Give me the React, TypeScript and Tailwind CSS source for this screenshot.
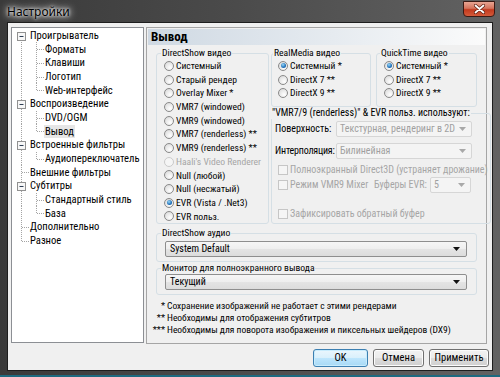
import React from "react";

type TreeRow = {
  label: string;
  level: 0 | 1;
  parent?: boolean;
  lastChild?: boolean;
  first?: boolean;
  last?: boolean;
  selected?: boolean;
};

const treeRows: TreeRow[] = [
  { label: "Проигрыватель", level: 0, parent: true, first: true },
  { label: "Форматы", level: 1 },
  { label: "Клавиши", level: 1 },
  { label: "Логотип", level: 1 },
  { label: "Web-интерфейс", level: 1, lastChild: true },
  { label: "Воспроизведение", level: 0, parent: true },
  { label: "DVD/OGM", level: 1 },
  { label: "Вывод", level: 1, lastChild: true, selected: true },
  { label: "Встроенные фильтры", level: 0, parent: true },
  { label: "Аудиопереключатель", level: 1, lastChild: true },
  { label: "Внешние фильтры", level: 0 },
  { label: "Субтитры", level: 0, parent: true },
  { label: "Стандартный стиль", level: 1 },
  { label: "База", level: 1, lastChild: true },
  { label: "Дополнительно", level: 0 },
  { label: "Разное", level: 0, last: true },
];

const H = 13.7;
const DOT = { stroke: "#a3a3a3", strokeWidth: 1, strokeDasharray: "1 1" };

function Connector({ r }: { r: TreeRow }) {
  const c = 7;
  if (r.level === 0)
    return (
      <svg width="18" height={H} viewBox={`0 0 18 ${H}`} className="shrink-0">
        <line x1="9.5" x2="9.5" y1={r.first ? c : 0} y2={r.last ? c : H} {...DOT} />
        {!r.parent && <line x1="10" x2="17" y1={c + 0.5} y2={c + 0.5} {...DOT} />}
        {r.parent && (
          <>
            <rect x="5.5" y={c - 3.5} width="8" height="8" fill="#f7f7f7" stroke="#919191" />
            <line x1="7.5" x2="11.5" y1={c + 0.5} y2={c + 0.5} stroke="#2a3a50" />
          </>
        )}
      </svg>
    );
  return (
    <svg width="33" height={H} viewBox={`0 0 33 ${H}`} className="shrink-0">
      <line x1="9.5" x2="9.5" y1={0} y2={H} {...DOT} />
      <line x1="24.5" x2="24.5" y1={0} y2={r.lastChild ? c : H} {...DOT} />
      <line x1="25" x2="32" y1={c + 0.5} y2={c + 0.5} {...DOT} />
    </svg>
  );
}

const Radio = ({ checked = false, disabled = false }: { checked?: boolean; disabled?: boolean }) => (
  <span
    className={`w-[10px] h-[10px] rounded-full border shrink-0 flex items-center justify-center ${
      disabled
        ? "border-[#cacaca] bg-[#f5f5f5]"
        : "border-[#8a8a8a] bg-[radial-gradient(circle_at_65%_70%,#ffffff,#e6e6e6_60%,#cfcfcf)]"
    }`}
  >
    {checked && (
      <span className="w-[5px] h-[5px] rounded-full bg-[radial-gradient(circle_at_40%_35%,#9ad8f8,#1f70b9_60%,#0d4a8a)]" />
    )}
  </span>
);

const RItem = ({ label, checked, disabled }: { label: string; checked?: boolean; disabled?: boolean }) => (
  <div className={`h-[13.7px] flex items-center gap-[2px] ${disabled ? "text-[#a6a6a6]" : ""}`}>
    <Radio checked={checked} disabled={disabled} />
    <span className="leading-none whitespace-nowrap text-[9.6px]">{label}</span>
  </div>
);

const Check = () => <span className="w-[10px] h-[10px] border border-[#c6c6c6] bg-[#f5f5f5] shrink-0" />;

const Arrow = ({ c }: { c: string }) => (
  <svg width="7" height="4" viewBox="0 0 7 4" className="shrink-0">
    <path d="M0 0H7L3.5 4Z" fill={c} />
  </svg>
);

const DisabledCombo = ({ text, w }: { text: string; w: string }) => (
  <div className={`${w} shrink-0 h-[16px] border border-[#d6d6d6] bg-[#f4f4f4] rounded-[2px] flex items-center justify-between pl-[3px] pr-[5px] text-[#a0a0a0]`}>
    <span className="leading-none whitespace-nowrap">{text}</span>
    <Arrow c="#a8a8a8" />
  </div>
);

const Combo = ({ text }: { text: string }) => (
  <div className="h-[16px] border border-[#8e8e8e] rounded-[2px] bg-[linear-gradient(#f6f6f6,#eeeeee_50%,#e4e4e4_50%,#dcdcdc)] flex items-center justify-between pl-[4px] pr-[6px]">
    <span className="leading-none whitespace-nowrap">{text}</span>
    <Arrow c="#111" />
  </div>
);

const Btn = ({ label, w, def }: { label: string; w: string; def?: boolean }) => (
  <button
    className={`${w} h-[18px] rounded-[3px] border text-[10.5px] leading-none flex items-center justify-center ${
      def
        ? "border-[#3c7fb1] bg-[linear-gradient(#eaf6fd,#d9f0fc_50%,#bee6fd_50%,#a7d9f5)] shadow-[inset_0_0_0_1px_#c8ecfd]"
        : "border-[#707070] bg-[linear-gradient(#f2f2f2,#ebebeb_50%,#dddddd_50%,#cfcfcf)] shadow-[inset_0_0_0_1px_#fcfcfc]"
    }`}
  >
    {label}
  </button>
);

export default function App() {
  return (
    <div className="w-[500px] h-[377px] overflow-hidden flex flex-col bg-[linear-gradient(90deg,#3a3a3a,#4a4a4a_45%,#626262)] font-['Liberation_Sans_Narrow','Roboto_Condensed','DejaVu_Sans_Condensed','Noto_Sans',sans-serif] text-[10px] text-black">
      {/* title bar */}
      <div className="h-[22px] shrink-0 flex items-start justify-between pl-[7px] pr-[5px]">
        <span className="mt-[3px] font-['Noto_Sans',sans-serif] text-[12px] leading-[18px] [text-shadow:0_0_6px_#fff,0_0_3px_#fff,0_0_10px_#fff]">
          Настройки
        </span>
        <div className="mt-[1px] w-[32px] h-[16px] rounded-b-[4px] border border-[#3b1a14] bg-[linear-gradient(#e8a593,#d4735c_45%,#c23a1e_55%,#d45a3a)] flex items-center justify-center">
          <svg width="11" height="10" viewBox="0 0 11 10">
            <path d="M1.5 1.5L9.5 8.5M9.5 1.5L1.5 8.5" stroke="#5a1d10" strokeWidth="3.2" strokeLinecap="round" />
            <path d="M1.5 1.5L9.5 8.5M9.5 1.5L1.5 8.5" stroke="#fff" strokeWidth="1.8" strokeLinecap="round" />
          </svg>
        </div>
      </div>

      {/* client */}
      <div className="mx-[7px] h-[349px] shrink-0 border border-[#1e1e1e] bg-[#f0f0f0] flex flex-col">
        <div className="flex pt-[4px] pl-[3px] gap-[2px]">
          {/* tree */}
          <div className="w-[133px] h-[316px] border border-[#8c8f94] bg-white pt-[0.5px] text-[10.6px]">
            {treeRows.map((r) => (
              <div key={r.label} className="h-[13.7px] flex items-center">
                <Connector r={r} />
                <span
                  className={`leading-[13px] whitespace-nowrap ml-[-1px] px-[1px] ${r.selected ? "bg-[#e6e6e6]" : ""}`}
                >
                  {r.label}
                </span>
              </div>
            ))}
          </div>

          {/* right panel */}
          <div className="w-[341px] h-[317px] border border-[#a5a5a5] flex flex-col">
            <div className="mx-[1px] mt-[1px] h-[16px] bg-[linear-gradient(90deg,#cfd9e3,#e6ebf0_55%,#fbfbfb)] pl-[3px] text-[13px] font-bold leading-[16px]">
              Вывод
            </div>

            <div className="px-[9px] flex flex-col">
              <div className="flex gap-[2px] mt-[2px]">
                {/* DirectShow video */}
                <fieldset className="w-[114px] h-[177px] border border-[#d5dfe5] rounded-[3px] p-0">
                  <legend className="ml-[4px] px-[1px] leading-[12px] text-[9.6px]">DirectShow видео</legend>
                  <div className="pl-[7px] flex flex-col">
                    <RItem label="Системный" />
                    <RItem label="Старый рендер" />
                    <RItem label="Overlay Mixer *" />
                    <RItem label="VMR7 (windowed)" />
                    <RItem label="VMR9 (windowed)" />
                    <RItem label="VMR7 (renderless) **" />
                    <RItem label="VMR9 (renderless) **" />
                    <RItem label="Haali's Video Renderer" disabled />
                    <RItem label="Null (любой)" />
                    <RItem label="Null (несжатый)" />
                    <RItem label="EVR (Vista / .Net3)" checked />
                    <RItem label="EVR польз." />
                  </div>
                </fieldset>

                <div className="w-[206px] flex flex-col">
                  <div className="flex gap-[5px]">
                    <fieldset className="w-[100px] h-[60px] border border-[#d5dfe5] rounded-[3px] p-0">
                      <legend className="ml-[1px] px-[1px] leading-[12px] text-[9.6px]">RealMedia видео</legend>
                      <div className="pl-[6px] flex flex-col">
                        <RItem label="Системный *" checked />
                        <RItem label="DirectX 7 **" />
                        <RItem label="DirectX 9 **" />
                      </div>
                    </fieldset>
                    <fieldset className="w-[101px] h-[60px] border border-[#d5dfe5] rounded-[3px] p-0">
                      <legend className="ml-[3px] px-[1px] leading-[12px] text-[9.6px]">QuickTime видео</legend>
                      <div className="pl-[7px] flex flex-col">
                        <RItem label="Системный *" checked />
                        <RItem label="DirectX 7 **" />
                        <RItem label="DirectX 9 **" />
                      </div>
                    </fieldset>
                  </div>

                  <fieldset className="w-[206px] h-[117px] border border-[#d5dfe5] rounded-[3px] p-0">
                    <legend className="ml-[-1px] px-[1px] leading-[12px] whitespace-nowrap">
                      "VMR7/9 (renderless)" &amp; EVR польз. используют:
                    </legend>
                    <div className="pl-[3px] pr-[2px] pt-[2px] flex flex-col">
                      <div className="flex items-center">
                        <span className="w-[61px] shrink-0 leading-none whitespace-nowrap">Поверхность:</span>
                        <DisabledCombo text="Текстурная, рендеринг в 2D" w="w-[136px]" />
                      </div>
                      <div className="flex items-center mt-[6px]">
                        <span className="w-[61px] shrink-0 leading-none whitespace-nowrap tracking-[-0.2px]">Интерполяция:</span>
                        <DisabledCombo text="Билинейная" w="w-[136px]" />
                      </div>
                      <div className="flex items-center gap-[2px] pl-[3px] h-[14px] mt-[4px] text-[#a6a6a6]">
                        <Check />
                        <span className="leading-none whitespace-nowrap">Полноэкранный Direct3D (устраняет дрожание)</span>
                      </div>
                      <div className="flex items-center pl-[3px] text-[#a6a6a6]">
                        <Check />
                        <span className="ml-[2px] w-[84px] shrink-0 leading-none whitespace-nowrap">Режим VMR9 Mixer</span>
                        <span className="w-[56px] shrink-0 leading-none whitespace-nowrap">Буферы EVR:</span>
                        <DisabledCombo text="5" w="w-[41px]" />
                      </div>
                      <div className="flex items-center gap-[2px] pl-[3px] h-[14px] mt-[14px] text-[#a6a6a6]">
                        <Check />
                        <span className="leading-none whitespace-nowrap">Зафиксировать обратный буфер</span>
                      </div>
                    </div>
                  </fieldset>
                </div>
              </div>

              <fieldset className="mt-[3px] h-[35px] border border-[#d5dfe5] rounded-[3px] p-0">
                <legend className="ml-[4px] px-[1px] leading-[12px] text-[9.6px]">DirectShow аудио</legend>
                <div className="pl-[8px] pr-[9px] pt-[2px]">
                  <Combo text="System Default" />
                </div>
              </fieldset>

              <fieldset className="h-[33px] border border-[#d5dfe5] rounded-[3px] p-0">
                <legend className="ml-[4px] px-[1px] leading-[12px] text-[9.6px]">Монитор для полноэкранного вывода</legend>
                <div className="pl-[8px] pr-[9px]">
                  <Combo text="Текущий" />
                </div>
              </fieldset>
            </div>

            <div className="mt-[5px] flex flex-col text-[9.5px]">
              {[
                ["*", "Сохранение изображений не работает с этими рендерами"],
                ["**", "Необходимы для отображения субтитров"],
                ["***", "Необходимы для поворота изображения и пиксельных шейдеров (DX9)"],
              ].map(([s, t]) => (
                <div key={s} className="flex h-[12px] items-center">
                  <span className="w-[18px] text-right leading-none">{s}</span>
                  <span className="ml-[2px] leading-none whitespace-nowrap">{t}</span>
                </div>
              ))}
            </div>
          </div>
        </div>

        <div className="flex justify-end gap-[5px] pr-[3px] mt-[5px]">
          <Btn label="OK" w="w-[55px]" def />
          <Btn label="Отмена" w="w-[51px]" />
          <Btn label="Применить" w="w-[60px]" />
        </div>
      </div>
      <div className="flex-1 border-b-[2px] border-[#1d6a80]" />
    </div>
  );
}
